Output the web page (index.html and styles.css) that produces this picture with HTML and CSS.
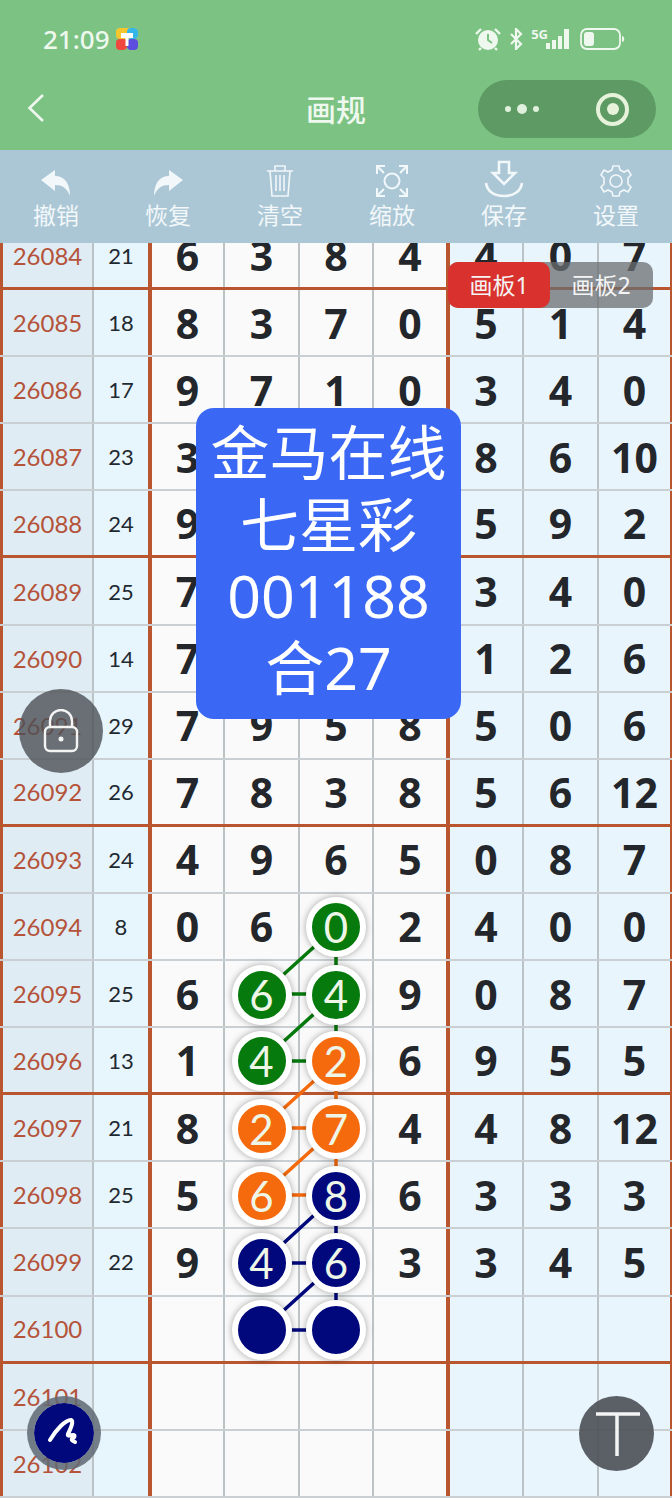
FILE: index.html
```html
<!DOCTYPE html>
<html lang="zh-CN">
<head>
    <meta charset="utf-8">
    <title>画规</title>
    <link rel="stylesheet" href="styles.css">
</head>
<body>
<div class="page">
    <!-- 状态栏 -->
    <div class="status-bar">
        <span class="clock">21:09</span>
        <svg class="app-badge" width="22" height="22" viewBox="0 0 22 22">
            <rect width="22" height="11" rx="4" fill="#f6c62f"/>
            <rect x="11" width="11" height="11" rx="4" fill="#35b6e8"/>
            <rect y="11" width="11" height="11" rx="4" fill="#f0483e"/>
            <rect x="11" y="11" width="11" height="11" rx="4" fill="#5d4ee0"/>
            <path d="M5 5h12v5H5zM9.500 10h3v8h-3z" fill="#fff"/>
        </svg>
        <div class="status-icons">
            <svg width="26" height="24" viewBox="0 0 26 24">
                <circle cx="13" cy="13" r="10" fill="#eef8ee"/>
                <path d="M13 7v6l4 3" fill="none" stroke="#7cc283" stroke-width="2"/>
                <path d="M1 7l5-5M25 7l-5-5M6 21l-2 2M20 21l2 2" stroke="#eef8ee" stroke-width="2.400"/>
            </svg>
            <svg class="bt" width="14" height="22" viewBox="0 0 14 22">
                <path d="M2 6l10 10-5 5V1l5 5L2 16" fill="none" stroke="#eef8ee" stroke-width="2.200"/>
            </svg>
            <div class="net">
                <span class="net-label">5G</span>
                <svg width="26" height="22" viewBox="0 0 26 22">
                    <rect x="0" y="15" width="4" height="6" fill="#eef8ee"/>
                    <rect x="6" y="12" width="4" height="9" fill="#eef8ee"/>
                    <rect x="12" y="8" width="4" height="13" fill="#eef8ee"/>
                    <rect x="18" y="1" width="5" height="20" fill="#eef8ee"/>
                </svg>
            </div>
            <svg width="46" height="22" viewBox="0 0 46 22">
                <rect x="1" y="1" width="39" height="20" rx="6" fill="none" stroke="#eef8ee" stroke-width="1.800"/>
                <rect x="4" y="4" width="10" height="14" rx="3" fill="#eef8ee"/>
                <path d="M42 8c3 0 3 6 0 6z" fill="#eef8ee"/>
            </svg>
        </div>
    </div>

    <!-- 标题栏 -->
    <header class="nav-bar">
        <svg class="back" width="20" height="30" viewBox="0 0 20 30">
            <path d="M17 2L3.500 15 17 28" fill="none" stroke="#eef8ee" stroke-width="2.600"/>
        </svg>
        <h1 class="nav-title">画规</h1>
        <div class="capsule">
            <div class="capsule-dots"><i></i><i class="big"></i><i></i></div>
            <div class="capsule-target"><i></i></div>
        </div>
    </header>

    <!-- 工具栏 -->
    <div class="toolbar">
        <div class="tool">
            <svg width="34" height="30" viewBox="0 0 34 30"><path d="M2 12L16 2v6c10 0 15 8 15 20-3-8-8-11-15-11v6z" fill="#f2f7fa"/></svg>
            <span>撤销</span>
        </div>
        <div class="tool">
            <svg width="34" height="30" viewBox="0 0 34 30"><path d="M32 12L18 2v6C8 8 3 16 3 28c3-8 8-11 15-11v6z" fill="#f2f7fa"/></svg>
            <span>恢复</span>
        </div>
        <div class="tool">
            <svg width="34" height="34" viewBox="0 0 34 34" fill="none" stroke="#f2f7fa" stroke-width="1.600">
                <path d="M4 7h26M12 7V2h10v5M7 7l2 25h16l2-25M13 11v16M17 11v16M21 11v16"/>
            </svg>
            <span>清空</span>
        </div>
        <div class="tool">
            <svg width="34" height="34" viewBox="0 0 34 34" fill="none" stroke="#f2f7fa" stroke-width="2">
                <circle cx="17" cy="17" r="7.500"/>
                <path d="M2 10V2h8M24 2h8v8M2 24v8h8M24 32h8v-8M3 3l6 6M31 3l-6 6M3 31l6-6M31 31l-6-6"/>
            </svg>
            <span>缩放</span>
        </div>
        <div class="tool">
            <svg width="40" height="38" viewBox="0 0 40 38" fill="none" stroke="#f2f7fa" stroke-width="2.600">
                <path d="M15 2h10v11h6L20 24 9 13h6z"/>
                <path d="M2 23c1 8 8 13 18 13s17-5 18-13"/>
            </svg>
            <span>保存</span>
        </div>
        <div class="tool">
            <svg width="34" height="34" viewBox="0 0 34 34" fill="none" stroke="#f2f7fa" stroke-width="1.600">
                <circle cx="17" cy="17" r="6"/>
                <path d="M14 2h6l1 4 4 2 4-2 3 5-3 3v6l3 3-3 5-4-2-4 2-1 4h-6l-1-4-4-2-4 2-3-5 3-3v-6L2 11l3-5 4 2 4-2z"/>
            </svg>
            <span>设置</span>
        </div>
    </div>

    <!-- 走势表 -->
    <main class="board">
        <div class="sheet">
            <div class="row sep"><b>26084</b><em>21</em><s>6</s><s>3</s><s>8</s><s class="edge">4</s><u>4</u><u>0</u><u>7</u></div>
            <div class="row"><b>26085</b><em>18</em><s>8</s><s>3</s><s>7</s><s class="edge">0</s><u>5</u><u>1</u><u>4</u></div>
            <div class="row"><b>26086</b><em>17</em><s>9</s><s>7</s><s>1</s><s class="edge">0</s><u>3</u><u>4</u><u>0</u></div>
            <div class="row"><b>26087</b><em>23</em><s>3</s><s></s><s></s><s class="edge"></s><u>8</u><u>6</u><u>10</u></div>
            <div class="row sep"><b>26088</b><em>24</em><s>9</s><s></s><s></s><s class="edge"></s><u>5</u><u>9</u><u>2</u></div>
            <div class="row"><b>26089</b><em>25</em><s>7</s><s></s><s></s><s class="edge"></s><u>3</u><u>4</u><u>0</u></div>
            <div class="row"><b>26090</b><em>14</em><s>7</s><s></s><s></s><s class="edge"></s><u>1</u><u>2</u><u>6</u></div>
            <div class="row"><b>26091</b><em>29</em><s>7</s><s>9</s><s>5</s><s class="edge">8</s><u>5</u><u>0</u><u>6</u></div>
            <div class="row sep"><b>26092</b><em>26</em><s>7</s><s>8</s><s>3</s><s class="edge">8</s><u>5</u><u>6</u><u>12</u></div>
            <div class="row"><b>26093</b><em>24</em><s>4</s><s>9</s><s>6</s><s class="edge">5</s><u>0</u><u>8</u><u>7</u></div>
            <div class="row"><b>26094</b><em>8</em><s>0</s><s>6</s><s><span class="ball green">0</span></s><s class="edge">2</s><u>4</u><u>0</u><u>0</u></div>
            <div class="row"><b>26095</b><em>25</em><s>6</s><s><span class="ball green">6</span></s><s><span class="ball green">4</span></s><s class="edge">9</s><u>0</u><u>8</u><u>7</u></div>
            <div class="row sep"><b>26096</b><em>13</em><s>1</s><s><span class="ball green">4</span></s><s><span class="ball orange">2</span></s><s class="edge">6</s><u>9</u><u>5</u><u>5</u></div>
            <div class="row"><b>26097</b><em>21</em><s>8</s><s><span class="ball orange">2</span></s><s><span class="ball orange">7</span></s><s class="edge">4</s><u>4</u><u>8</u><u>12</u></div>
            <div class="row"><b>26098</b><em>25</em><s>5</s><s><span class="ball orange">6</span></s><s><span class="ball navy">8</span></s><s class="edge">6</s><u>3</u><u>3</u><u>3</u></div>
            <div class="row"><b>26099</b><em>22</em><s>9</s><s><span class="ball navy">4</span></s><s><span class="ball navy">6</span></s><s class="edge">3</s><u>3</u><u>4</u><u>5</u></div>
            <div class="row sep"><b>26100</b><em></em><s></s><s><span class="ball navy"></span></s><s><span class="ball navy"></span></s><s class="edge"></s><u></u><u></u><u></u></div>
            <div class="row"><b>26101</b><em></em><s></s><s></s><s></s><s class="edge"></s><u></u><u></u><u></u></div>
            <div class="row"><b>26102</b><em></em><s></s><s></s><s></s><s class="edge"></s><u></u><u></u><u></u></div>
        </div>
    </main>

    <!-- 号码连线 -->
    <svg class="links" width="672" height="1500" viewBox="0 0 672 1500" stroke-width="3.500">
        <g stroke="#067a0c">
            <path d="M336 927V994M262 994H336M336 927L262 994M336 994V1061M262 1061H336M336 994L262 1061"/>
        </g>
        <g stroke="#f56a0c">
            <path d="M336 1061V1128M262 1128H336M336 1061L262 1128M336 1128V1195M262 1195H336M336 1128L262 1195"/>
        </g>
        <g stroke="#00087c">
            <path d="M336 1195V1263M262 1263H336M336 1195L262 1263M336 1263V1330M262 1330H336M336 1263L262 1330"/>
        </g>
    </svg>

    <!-- 画板切换 -->
    <div class="tabs">
        <span class="tab on">画板1</span>
        <span class="tab">画板2</span>
    </div>

    <!-- 推荐号码卡片 -->
    <div class="promo">
        <p>金马在线</p>
        <p>七星彩</p>
        <p>001188</p>
        <p>合27</p>
    </div>

    <!-- 悬浮按钮 -->
    <div class="fab lock">
        <svg width="36" height="44" viewBox="0 0 36 44" fill="none" stroke="#f4f4f4" stroke-width="2.400">
            <path d="M7 18v-6a11 11 0 0 1 22 0v6"/>
            <rect x="2" y="18" width="32" height="24" rx="5"/>
            <circle cx="18" cy="30" r="2.500" fill="#f4f4f4" stroke="none"/>
        </svg>
    </div>
    <div class="fab pen">
        <svg width="38" height="38" viewBox="0 0 38 38" fill="none" stroke="#fff" stroke-width="4" stroke-linecap="round" stroke-linejoin="round">
            <path d="M5 26C11 16 20 6 26 6c3 1 0 8-3 14-1 3 3 1 5 1 3 0 1 3-1 4-1 1 1 2 3 3"/>
        </svg>
    </div>
    <div class="fab text">
        <svg width="46" height="46" viewBox="0 0 46 46" stroke="#f4f4f4" stroke-width="3.500">
            <path d="M2 3h44M23 3v42"/>
        </svg>
    </div>
</div>
</body>
</html>
```

FILE: styles.css
```css
* { box-sizing: border-box; margin: 0; padding: 0; }

body {
    font-family: "Noto Sans", "Noto Sans CJK SC", sans-serif;
    background: #fff;
}

.page {
    position: relative;
    width: 672px;
    height: 1500px;
    overflow: hidden;
    display: flex;
    flex-direction: column;
}

/* 状态栏 */
.status-bar {
    height: 78px;
    flex: none;
    background: #7cc283;
    display: flex;
    align-items: center;
    padding: 0 46px 0 43px;
    color: #eef8ee;
}
.clock { font-size: 26px; line-height: 1; font-weight: 500; }
.app-badge { margin-left: 6px; }
.status-icons {
    margin-left: auto;
    display: flex;
    align-items: center;
    gap: 8px;
}
.net { display: flex; align-items: flex-end; }
.net-label {
    font-size: 13px;
    line-height: 1;
    font-weight: 700;
    align-self: flex-start;
    margin-right: -2px;
}

/* 标题栏 */
.nav-bar {
    height: 72px;
    flex: none;
    background: #7cc283;
    position: relative;
    display: flex;
    align-items: center;
    justify-content: space-between;
    padding: 0 16px 12px 26px;
}
.nav-title {
    position: absolute;
    left: 0;
    right: 0;
    top: 12px;
    text-align: center;
    font-size: 30px;
    line-height: 40px;
    font-weight: 500;
    color: #eef8ee;
}
.capsule {
    width: 178px;
    height: 58px;
    margin-top: 2px;
    border-radius: 29px;
    background: #5d9a64;
    display: flex;
    align-items: center;
    justify-content: space-between;
    padding: 0 27px;
}
.capsule-dots { display: flex; align-items: center; gap: 6px; }
.capsule-dots i { width: 6px; height: 6px; border-radius: 50%; background: #dff0dc; }
.capsule-dots i.big { width: 10px; height: 10px; }
.capsule-target {
    width: 33px;
    height: 33px;
    border-radius: 50%;
    border: 4px solid #e6f3da;
    display: flex;
    align-items: center;
    justify-content: center;
}
.capsule-target i { width: 12px; height: 12px; border-radius: 50%; background: #e6f3da; }

/* 工具栏 */
.toolbar {
    height: 93px;
    flex: none;
    background: #abc7d5;
    display: grid;
    grid-template-columns: repeat(6, 112px);
}
.tool {
    display: flex;
    flex-direction: column;
    align-items: center;
    justify-content: flex-end;
    padding-bottom: 13px;
    color: #f2f7fa;
    font-size: 23px;
    line-height: 30px;
}
.tool svg { display: block; margin-bottom: 2px; }

/* 走势表 */
.board {
    flex: 1;
    overflow: hidden;
    background: #fff;
}
.sheet { margin-top: -20px; }
.row {
    display: grid;
    grid-template-columns: 94px 58px 73px 75px 74px 76px 74px 75px 73px;
    height: 67.1px;
    border-bottom: 2px solid #c9cfd2;
}
.row.sep { border-bottom: 3px solid #b9562f; }
.row > * {
    display: flex;
    align-items: center;
    justify-content: center;
    text-decoration: none;
    font-style: normal;
    border-right: 2px solid #bcc3c6;
}
.row b {
    background: #dfecf3;
    border-left: 3px solid #b9562f;
    color: #b5533a;
    font-family: "Lato", "Noto Sans", sans-serif;
    font-size: 24px;
    font-weight: 400;
}
.row em {
    background: #e7f5fd;
    border-right: 4px solid #b9562f;
    color: #1f2a30;
    font-family: "Lato", "Noto Sans", sans-serif;
    font-size: 22px;
}
.row s, .row u {
    color: #23272b;
    font-size: 41px;
    font-weight: 700;
}
.row s { background: #fbfafa; }
.row u { background: #e9f5fd; }
.row s.edge { border-right: 4px solid #b9562f; }
.row u:last-child { border-right: 2px solid #b9562f; }

/* 号码球 */
.ball {
    position: relative;
    z-index: 2;
    width: 60px;
    height: 60px;
    flex: none;
    margin-top: 2px;
    border-radius: 50%;
    border: 6px solid #fff;
    box-shadow: 0 0 7px rgba(0,0,0,0.35);
    display: flex;
    align-items: center;
    justify-content: center;
    font-family: "Lato", sans-serif;
    font-size: 42px;
    font-weight: 400;
    color: #eef6e8;
}
.ball.green { background: #067a0c; }
.ball.orange { background: #f56a0c; }
.ball.navy { background: #00087c; }

.links {
    position: absolute;
    left: 0;
    top: 0;
    z-index: 1;
    pointer-events: none;
}

/* 画板切换 */
.tabs {
    position: absolute;
    z-index: 3;
    left: 448px;
    top: 262px;
    width: 205px;
    height: 46px;
    display: flex;
    border-radius: 10px;
    background: rgba(105,110,112,0.75);
}
.tab {
    width: 102px;
    display: flex;
    align-items: center;
    justify-content: center;
    padding-bottom: 3px;
    font-size: 23px;
    color: #f4f4f4;
    border-radius: 10px;
}
.tab.on { background: #d9322e; }

/* 推荐号码卡片 */
.promo {
    position: absolute;
    z-index: 3;
    left: 196px;
    top: 408px;
    width: 265px;
    height: 311px;
    padding-top: 9px;
    border-radius: 18px;
    background: #3a68f5;
    color: #fff;
    text-align: center;
    font-size: 59px;
    line-height: 71.500px;
}

/* 悬浮按钮 */
.fab {
    position: absolute;
    z-index: 4;
    border-radius: 50%;
    display: flex;
    align-items: center;
    justify-content: center;
}
.fab.lock {
    left: 19px;
    top: 689px;
    width: 84px;
    height: 84px;
    background: rgba(75,80,85,0.8);
}
.fab.pen {
    left: 27px;
    top: 1396px;
    width: 74px;
    height: 74px;
    background: #00087c;
    border: 7px solid rgba(95,105,115,0.85);
    background-clip: padding-box;
}
.fab.text {
    left: 579px;
    top: 1396px;
    width: 75px;
    height: 75px;
    background: rgba(75,80,85,0.9);
}
```
